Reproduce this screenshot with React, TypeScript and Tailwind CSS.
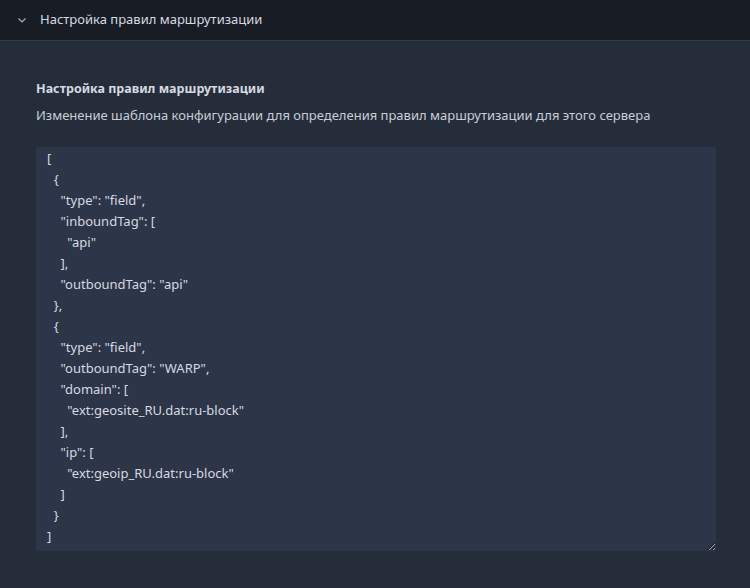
import React from 'react';

const config = `[
  {
    "type": "field",
    "inboundTag": [
      "api"
    ],
    "outboundTag": "api"
  },
  {
    "type": "field",
    "outboundTag": "WARP",
    "domain": [
      "ext:geosite_RU.dat:ru-block"
    ],
    "ip": [
      "ext:geoip_RU.dat:ru-block"
    ]
  }
]`;

const App = () => {
  return (
    <div className="h-[588px] w-[750px] bg-[#252d3b] font-['Open_Sans',sans-serif] text-[#d5d9e0]">
      {/* Header */}
      <div className="flex h-[41px] items-center gap-3 border-b border-[#313a4a] bg-[#181c24] px-4">
        <svg width="12" height="12" viewBox="0 0 12 12" fill="none" stroke="#aab1bd" strokeWidth="1.2">
          <path d="M2.5 4.5 6 8l3.5-3.5" />
        </svg>
        <span className="text-[13px] text-[#d5d9e0]">Настройка правил маршрутизации</span>
      </div>

      {/* Body */}
      <div className="px-9 pt-[38px]">
        <h3 className="text-[12.5px] font-bold leading-[20px] text-[#d5d9e0]">Настройка правил маршрутизации</h3>
        <p className="mt-[6px] text-[13px] leading-[20px] text-[#c8cdd6]">
          Изменение шаблона конфигурации для определения правил маршрутизации для этого сервера
        </p>
        <textarea
          defaultValue={config}
          spellCheck={false}
          className="mt-[22px] block h-[404px] w-[680px] resize-y rounded-[2px] bg-[#2d3548] px-[11px] pt-[1px] text-[13px] leading-[21px] text-[#d5d9e0] outline-none"
        />
      </div>
    </div>
  );
};

export default App;
